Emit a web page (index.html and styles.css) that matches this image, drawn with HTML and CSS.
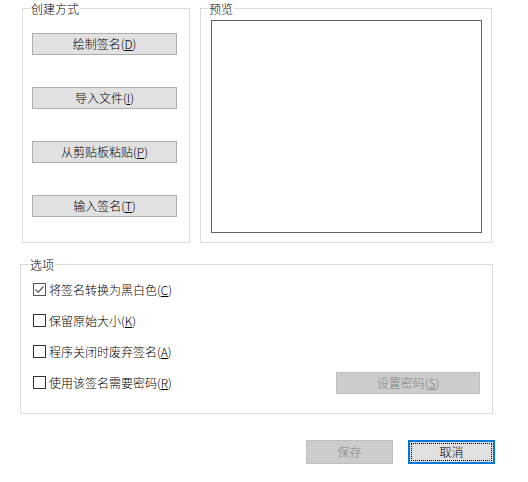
FILE: index.html
```html
<!DOCTYPE html>
<html lang="zh-CN">
  <head>
    <meta charset="UTF-8" />
    <title>签名</title>
    <link rel="stylesheet" href="styles.css">
  </head>
  <body>
    <div class="top">
      <fieldset class="group create">
        <legend>创建方式</legend>
        <div class="create-buttons">
          <button type="button" class="btn wide">绘制签名(<u>D</u>)</button>
          <button type="button" class="btn wide">导入文件(<u>I</u>)</button>
          <button type="button" class="btn wide">从剪贴板粘贴(<u>P</u>)</button>
          <button type="button" class="btn wide">输入签名(<u>T</u>)</button>
        </div>
      </fieldset>

      <fieldset class="group preview">
        <legend>预览</legend>
        <div class="preview-box"></div>
      </fieldset>
    </div>

    <fieldset class="group options">
      <legend>选项</legend>
      <div class="option-rows">
        <label class="row">
          <span class="check checked">
            <svg width="11" height="11" viewBox="0 0 11 11"><path d="M1.5 5.5 L4.2 8.2 L9.5 2.5" fill="none" stroke="#555" stroke-width="1.2"/></svg>
          </span>
          将签名转换为黑白色(<u>C</u>)
        </label>
        <label class="row"><span class="check"></span>保留原始大小(<u>K</u>)</label>
        <label class="row"><span class="check"></span>程序关闭时废弃签名(<u>A</u>)</label>
        <div class="row">
          <label class="row-label"><span class="check"></span>使用该签名需要密码(<u>R</u>)</label>
          <button type="button" class="btn pwd" disabled>设置密码(<u>S</u>)</button>
        </div>
      </div>
    </fieldset>

    <div class="actions">
      <button type="button" class="btn action" disabled>保存</button>
      <button type="button" class="btn action focused">取消</button>
    </div>
  </body>
</html>
```

FILE: styles.css
```css
body {
  margin: 0;
  background-color: #ffffff;
  font-family: "Noto Sans CJK SC", "Liberation Sans", sans-serif;
  font-size: 12px;
  font-weight: 300;
  color: #000000;
}
.top {
  display: flex;
  gap: 10px;
  padding-left: 22px;
}
.group {
  margin: 0;
  padding: 0;
  border: 1px solid #dcdcdc;
  box-sizing: border-box;
  min-width: 0;
}
.group legend {
  margin-left: 7px;
  padding: 0 1px;
  line-height: 17px;
  height: 17px;
}
.create {
  width: 168px;
  height: 243px;
}
.create-buttons {
  display: flex;
  flex-direction: column;
  gap: 32px;
  padding: 16px 0 0 9px;
}
.preview {
  width: 292px;
  height: 243px;
}
.preview-box {
  margin: 3px 9px 0 10px;
  height: 213px;
  border: 1px solid #646464;
  box-sizing: border-box;
}
.btn {
  font-family: inherit;
  font-size: 12px;
  font-weight: 300;
  color: #000000;
  background-color: #e1e1e1;
  border: 1px solid #adadad;
  padding: 0;
  box-sizing: border-box;
  line-height: 18px;
}
.btn u {
  text-decoration: underline;
}
.btn[disabled] {
  background-color: #cccccc;
  border-color: #bfbfbf;
  color: #838383;
}
.wide {
  width: 145px;
  height: 22px;
}
.options {
  margin: 13px 0 0 20px;
  width: 473px;
  height: 158px;
}
.options legend {
  margin-left: 8px;
}
.option-rows {
  display: flex;
  flex-direction: column;
  padding: 1px 12px 0 12px;
}
.row {
  display: flex;
  align-items: center;
  height: 31px;
}
.row-label {
  display: flex;
  align-items: center;
  flex: 1;
}
.check {
  width: 13px;
  height: 13px;
  border: 1px solid #333333;
  box-sizing: border-box;
  margin-right: 3px;
  display: flex;
  align-items: center;
  justify-content: center;
}
.check.checked {
  border-color: #555555;
}
.pwd {
  width: 144px;
  height: 22px;
}
.actions {
  display: flex;
  justify-content: flex-end;
  gap: 15px;
  margin-top: 26px;
  padding-right: 33px;
}
.action {
  width: 87px;
  height: 24px;
}
.focused {
  border: 2px solid #0078d7;
  outline: 1px dotted #000000;
  outline-offset: -4px;
}
```
